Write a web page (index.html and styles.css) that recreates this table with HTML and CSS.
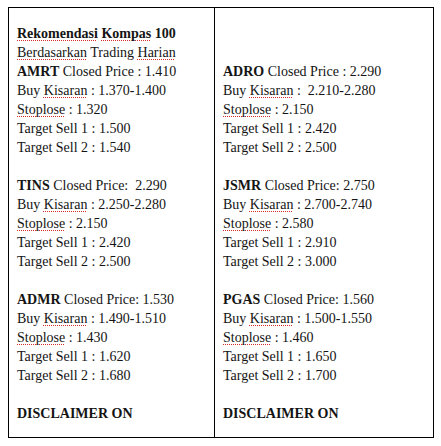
FILE: index.html
```html
<!DOCTYPE html>
<html lang="id">
<head>
    <meta charset="UTF-8">
    <meta name="viewport" content="width=device-width, initial-scale=1.0">
    <title>Rekomendasi Kompas 100</title>
    <link rel="stylesheet" href="styles.css">
</head>
<body>
    <div class="sheet">
        <div class="cell">
            <div class="head">
                <p class="bold"><span class="typo">Rekomendasi</span> <span class="typo">Kompas</span> 100</p>
                <p><span class="typo">Berdasarkan</span> Trading <span class="typo">Harian</span></p>
            </div>
            <div class="pick">
                <p><b>AMRT</b> Closed Price : 1.410</p>
                <p>Buy <span class="typo">Kisaran</span> : 1.370-1.400</p>
                <p><span class="typo">Stoplose</span> : 1.320</p>
                <p>Target Sell 1 : 1.500</p>
                <p>Target Sell 2 : 1.540</p>
            </div>
            <div class="pick">
                <p><b>TINS</b> Closed Price:&nbsp; 2.290</p>
                <p>Buy <span class="typo">Kisaran</span> : 2.250-2.280</p>
                <p><span class="typo">Stoplose</span> : 2.150</p>
                <p>Target Sell 1 : 2.420</p>
                <p>Target Sell 2 : 2.500</p>
            </div>
            <div class="pick">
                <p><b>ADMR</b> Closed Price: 1.530</p>
                <p>Buy <span class="typo">Kisaran</span> : 1.490-1.510</p>
                <p><span class="typo">Stoplose</span> : 1.430</p>
                <p>Target Sell 1 : 1.620</p>
                <p>Target Sell 2 : 1.680</p>
            </div>
            <p class="disclaimer">DISCLAIMER ON</p>
        </div>
        <div class="cell">
            <div class="head"></div>
            <div class="pick">
                <p><b>ADRO</b> Closed Price : 2.290</p>
                <p>Buy <span class="typo">Kisaran</span> :&nbsp; 2.210-2.280</p>
                <p><span class="typo">Stoplose</span> : 2.150</p>
                <p>Target Sell 1 : 2.420</p>
                <p>Target Sell 2 : 2.500</p>
            </div>
            <div class="pick">
                <p><b>JSMR</b> Closed Price: 2.750</p>
                <p>Buy <span class="typo">Kisaran</span> : 2.700-2.740</p>
                <p><span class="typo">Stoplose</span> : 2.580</p>
                <p>Target Sell 1 : 2.910</p>
                <p>Target Sell 2 : 3.000</p>
            </div>
            <div class="pick">
                <p><b>PGAS</b> Closed Price: 1.560</p>
                <p>Buy <span class="typo">Kisaran</span> : 1.500-1.550</p>
                <p><span class="typo">Stoplose</span> : 1.460</p>
                <p>Target Sell 1 : 1.650</p>
                <p>Target Sell 2 : 1.700</p>
            </div>
            <p class="disclaimer">DISCLAIMER ON</p>
        </div>
    </div>
</body>
</html>
```

FILE: styles.css
```css
body {
    font-family: "Liberation Serif", "Times New Roman", serif;
    font-size: 14px;
    line-height: 19px;
    color: #141414;
    background-color: #fff;
    margin: 0;
    padding: 7px 0 0 8px;
}
p {
    margin: 0;
    white-space: nowrap;
}
.sheet {
    position: relative;
    width: 426px;
    box-sizing: border-box;
    display: grid;
    grid-template-columns: 206px 1fr;
    border: 1px solid #000;
}
/* the column rule runs on past the bottom edge */
.sheet::after {
    content: "";
    position: absolute;
    left: 205px;
    bottom: -10px;
    width: 1px;
    height: 10px;
    background-color: #000;
}
.cell {
    padding: 16px 8px 14px 8px;
}
.cell:first-child {
    border-right: 1px solid #000;
}
.head {
    height: 38px;
}
.bold,
.disclaimer {
    font-weight: bold;
}
.pick + .pick,
.disclaimer {
    margin-top: 19px;
}
.typo {
    text-decoration: underline dotted #d42a2a;
    text-decoration-thickness: 1px;
    text-underline-offset: 2px;
}
```
